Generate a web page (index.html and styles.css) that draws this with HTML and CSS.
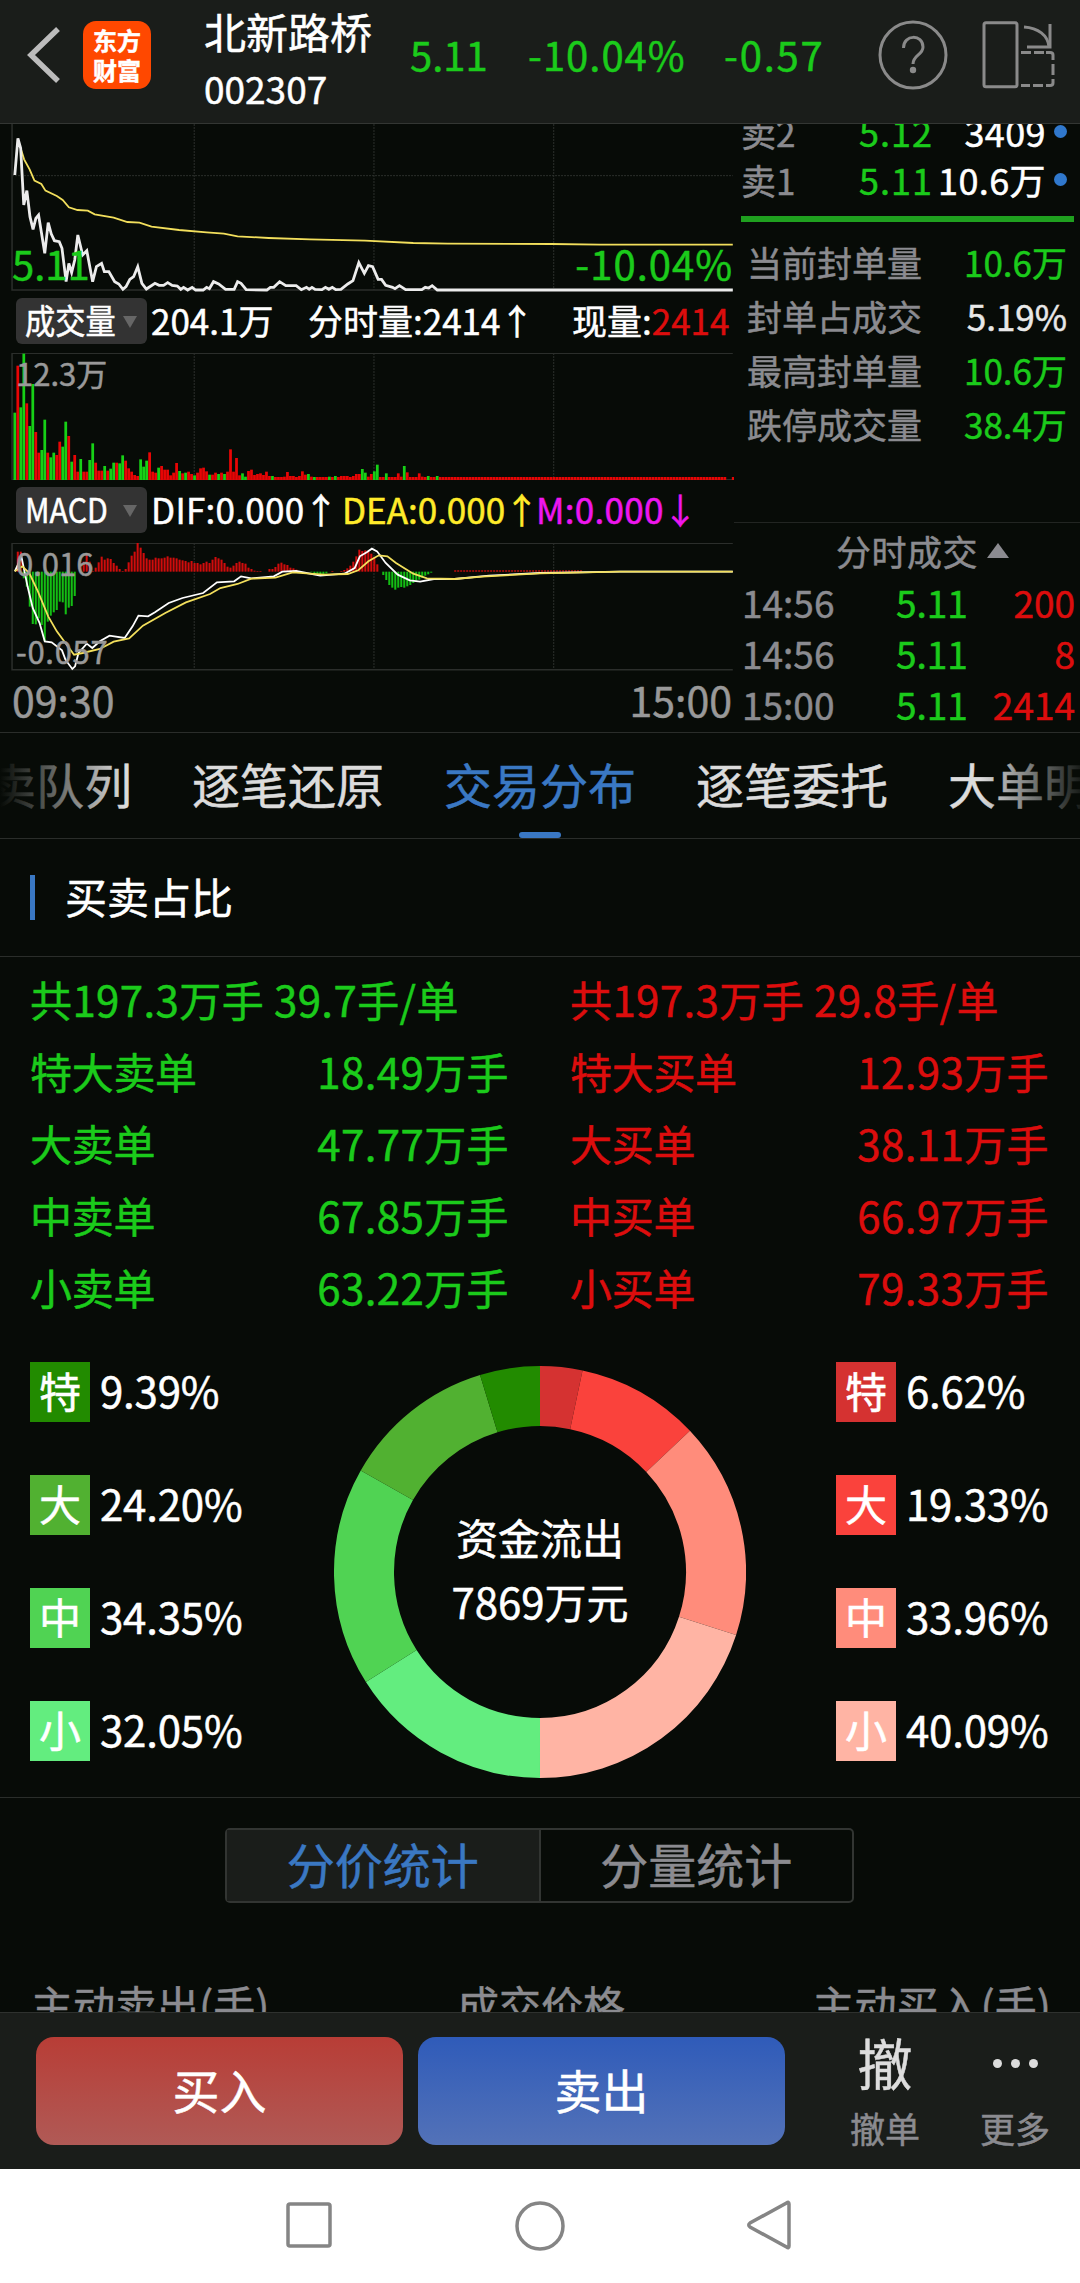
FILE: index.html
```html
<!DOCTYPE html>
<html lang="zh-CN">
<head>
  <meta charset="UTF-8">
  <meta name="viewport" content="width=device-width, initial-scale=1.0">
  <title>北新路桥 002307</title>
  <link rel="stylesheet" href="styles.css">
</head>
<body>
  <header class="topbar">
    <svg class="back" viewBox="0 0 40 60"><path d="M33 4 L6 30 L33 56"/></svg>
    <div class="logo">东方<br>财富</div>
    <div class="stock">
      <div class="stock-name">北新路桥</div>
      <div class="stock-code">002307</div>
    </div>
    <div class="quote">
      <span class="q-price">5.11</span>
      <span class="q-pct">-10.04%</span>
      <span class="q-diff">-0.57</span>
    </div>
    <svg class="help" viewBox="0 0 70 70">
      <circle cx="35" cy="35" r="33"/>
      <path d="M25.5 28 C25.5 14 45 14 45 27 C45 35 35 35 35 44"/>
      <circle class="dot" cx="35" cy="50" r="3.2"/>
    </svg>
    <svg class="rotate" viewBox="0 0 74 68">
      <rect x="2" y="1.8" width="33" height="64" rx="2"/>
      <path d="M42 6 C56 7 66 14 67 26"/>
      <path d="M68 3 V26 H45"/>
      <path d="M39 31.5 H49 M52 31.5 H62 M64 31.5 H68 Q71 31.5 71 34 V39 M71 43 V54 M71 58 V62 Q71 64.5 68 64.5 H64 M61 64.5 H51 M48 64.5 H39"/>
    </svg>
  </header>

  <!-- Minute charts and order book -->
  <section class="market">
    <div class="charts">
      <div class="chart price-chart">
        <svg viewBox="0 372 2131.5 504" preserveAspectRatio="none">
          <path class="grid" d="M564 372 V870 M1086 372 V870 M1608 372 V870 M35 527 H2128"/>
          <path class="frame" d="M35 372 V870 H2128"/>
          <polyline class="avg" points="60,445 70,478 86,508 100,542 120,552 132,572 165,588 182,600 200,622 225,630 255,632 275,643 330,653 370,666 405,668 440,680 520,690 600,697 650,701 690,709 780,714 900,718 1060,722 1200,729 1300,731 1600,732 1743,734 2128,734"/>
          <polyline class="price" points="43,525 52,415 60,445 69,615 78,572 87,650 96,688 104,655 112,645 130,760 140,668 149,702 158,722 172,725 180,745 192,845 200,790 208,818 217,780 226,705 240,765 252,752 269,845 280,800 295,790 303,815 316,815 333,845 345,852 357,868 366,860 377,838 388,830 400,800 412,850 425,867 450,850 462,856 475,856 487,848 500,856 515,858 525,868 533,862 545,870 558,862 568,870 590,870 600,862 608,866 620,845 635,852 655,868 680,868 690,845 700,850 715,869 775,870 785,862 795,862 812,845 830,857 860,857 875,869 890,862 898,868 906,862 915,868 935,869 945,862 955,868 965,862 975,869 990,868 1010,852 1025,842 1042,788 1058,820 1070,797 1082,800 1098,838 1108,838 1120,856 1140,862 1147,866 1160,857 1178,869 1225,869 1235,862 1245,864 1255,857 1270,870 2128,870"/>
        </svg>
        <span class="low-price">5.11</span>
        <span class="low-pct">-10.04%</span>
      </div>

      <div class="ind-row">
        <div class="pill"><span>成交量</span><i class="down"></i></div>
        <span class="v-total">204.1万</span>
        <span class="v-min">分时量:2414<b class="arr">↑</b></span>
        <span class="v-now">现量:<em>2414</em></span>
      </div>

      <div class="chart vol-chart">
        <svg viewBox="0 70 2131.5 381" preserveAspectRatio="none">
          <path class="grid" d="M564 70 V451 M1086 70 V451 M1608 70 V451"/>
          <path class="frame" d="M2128 71 H35 V450 H2128"/>
          <g id="volBars"></g>
        </svg>
        <span class="scale-top">12.3万</span>
      </div>

      <div class="ind-row">
        <div class="pill"><span>MACD</span><i class="down"></i></div>
        <span class="m-dif">DIF:0.000<b class="arr">↑</b></span>
        <span class="m-dea">DEA:0.000<b class="arr">↑</b></span>
        <span class="m-m">M:0.000<b class="arr">↓</b></span>
      </div>

      <div class="chart macd-chart">
        <svg viewBox="0 640 2131.5 384" preserveAspectRatio="none">
          <path class="grid" d="M564 640 V1020 M1086 640 V1020 M1608 640 V1020"/>
          <path class="frame" d="M2128 641 H35 V1020 H2128"/>
          <g id="macdBars"></g>
          <polyline class="dif" points="43,725 52,705 62,680 70,720 80,770 95,835 115,880 130,935 150,938 180,962 190,990 210,1018 218,1010 228,970 252,942 268,955 290,935 318,918 362,925 385,890 402,858 430,860 450,848 490,820 530,805 590,790 630,758 680,755 700,740 730,746 795,740 820,726 860,724 930,738 1000,732 1030,715 1045,680 1065,668 1080,657 1095,665 1120,700 1155,735 1190,752 1220,756 1260,748 1320,748 1420,738 1568,730 1800,726 2128,726"/>
          <polyline class="dea" points="43,725 65,710 85,730 110,785 140,860 165,905 190,940 215,975 240,970 290,958 330,936 375,926 415,888 480,850 540,818 610,793 640,775 690,763 730,747 800,744 850,728 940,735 1010,733 1040,722 1070,695 1100,677 1125,680 1150,700 1200,732 1240,746 1320,748 1400,741 1568,731 1800,726 2128,726"/>
        </svg>
        <span class="scale-top">0.016</span>
        <span class="scale-bottom">-0.057</span>
      </div>

      <div class="times"><span>09:30</span><span>15:00</span></div>
    </div>

    <aside class="book">
      <div class="asks">
        <div class="ask"><span>卖2</span><span class="green">5.12</span><span class="qty">3409</span><i></i></div>
        <div class="ask"><span>卖1</span><span class="green">5.11</span><span class="qty">10.6万</span><i></i></div>
      </div>
      <div class="seal">
        <div><span>当前封单量</span><span class="green">10.6万</span></div>
        <div><span>封单占成交</span><span class="light">5.19%</span></div>
        <div><span>最高封单量</span><span class="green">10.6万</span></div>
        <div><span>跌停成交量</span><span class="green">38.4万</span></div>
      </div>
      <div class="deals-title">分时成交<i></i></div>
      <div class="deals">
        <div><span>14:56</span><span class="green">5.11</span><span class="red">200</span></div>
        <div><span>14:56</span><span class="green">5.11</span><span class="red">8</span></div>
        <div><span>15:00</span><span class="green">5.11</span><span class="red">2414</span></div>
      </div>
    </aside>
  </section>

  <nav class="tabs">
    <span>买卖队列</span>
    <span>逐笔还原</span>
    <span class="active">交易分布</span>
    <span>逐笔委托</span>
    <span>大单明细</span>
  </nav>

  <h2 class="section-title">买卖占比</h2>

  <section class="orders">
    <div class="col green">
      <div>共197.3万手 39.7手/单</div>
      <div><span>特大卖单</span><span>18.49万手</span></div>
      <div><span>大卖单</span><span>47.77万手</span></div>
      <div><span>中卖单</span><span>67.85万手</span></div>
      <div><span>小卖单</span><span>63.22万手</span></div>
    </div>
    <div class="col red">
      <div>共197.3万手 29.8手/单</div>
      <div><span>特大买单</span><span>12.93万手</span></div>
      <div><span>大买单</span><span>38.11万手</span></div>
      <div><span>中买单</span><span>66.97万手</span></div>
      <div><span>小买单</span><span>79.33万手</span></div>
    </div>
  </section>

  <section class="flow">
    <div class="legend">
      <div><b class="s1">特</b>9.39%</div>
      <div><b class="s2">大</b>24.20%</div>
      <div><b class="s3">中</b>34.35%</div>
      <div><b class="s4">小</b>32.05%</div>
    </div>
    <div class="donut">
      <svg viewBox="0 0 412 412"><g id="ring"></g></svg>
      <div class="donut-text">资金流出<br>7869万元</div>
    </div>
    <div class="legend buy">
      <div><b class="b1">特</b>6.62%</div>
      <div><b class="b2">大</b>19.33%</div>
      <div><b class="b3">中</b>33.96%</div>
      <div><b class="b4">小</b>40.09%</div>
    </div>
  </section>

  <section class="stats">
    <div class="switch">
      <span class="on">分价统计</span>
      <span>分量统计</span>
    </div>
    <div class="stats-head">
      <span>主动卖出(手)</span>
      <span>成交价格</span>
      <span>主动买入(手)</span>
    </div>
  </section>

  <footer class="trade">
    <button class="buy-btn">买入</button>
    <button class="sell-btn">卖出</button>
    <div class="tool"><strong>撤</strong><small>撤单</small></div>
    <div class="tool more"><div class="dots"><i></i><i></i><i></i></div><small>更多</small></div>
  </footer>

  <div class="sysnav">
    <svg viewBox="0 0 52 52"><rect x="5" y="5" width="42" height="42" rx="2"/></svg>
    <svg viewBox="0 0 52 52"><circle cx="27" cy="27" r="23"/></svg>
    <svg viewBox="0 0 52 52"><path d="M46 5 V47 Q46 50 43.5 48 L7 28 Q4.5 26 7 24 L43.5 4 Q46 2 46 5 Z"/></svg>
  </div>

  <script>
    const NS = 'http://www.w3.org/2000/svg';
    const RED = '#e80505';
    const GREEN = '#16d016';
    const STEP = 8.7;

    function addBar(group, i, y, h, color, width) {
      const bar = document.createElementNS(NS, 'rect');
      bar.setAttribute('x', 43 + i * STEP - width / 2);
      bar.setAttribute('y', y);
      bar.setAttribute('width', width);
      bar.setAttribute('height', h);
      bar.setAttribute('fill', color);
      group.appendChild(bar);
    }

    // Volume per minute, negative = falling minute
    const volume = [
      -202, 343, -218, -379, 230, -162, -288, 144, 82, -90, -181, 82, -68, -82, 75, 115, -100, -175, 132, -55,
      75, 25, -63, 25, 25, -60, -110, 52, 28, 28, -42, 28, -34, -52, 52, -50, -74, 58, 35, 25,
      15, 12, -62, -40, -58, 83, 25, 22, -37, 42, 31, 31, 14, 22, 51, -27, 20, -22, 25, 18,
      -14, 22, 35, 37, 26, -16, 16, 22, -18, 22, -18, 25, 92, 25, 66, 14, -20, -10, 27, 31,
      15, 18, 20, 15, 25, 12, -12, 9, 9, 9, 10, 24, 12, 12, 9, 12, 26, 16, -18, 10,
      -9, 9, 9, 9, 9, -10, 9, -12, 9, 12, 12, 12, 9, 12, 18, 18, -33, -22, 10, 18,
      -26, -46, 9, 9, -20, 9, 9, 9, 20, 10, -42, 23, 9, 9, 9, 20, 10, 9, -12, 9, 9, -12
    ];
    const volBars = document.getElementById('volBars');
    for (let i = 0; i < 238; i++) {
      const v = i < volume.length ? volume[i] : 9;
      addBar(volBars, i, 451 - Math.abs(v), Math.abs(v), v < 0 ? GREEN : RED, 8);
    }
    addBar(volBars, 239.8, 442, 9, RED, 8);

    // MACD histogram around the zero line
    const macd = [
      0, 60, 60, -20, -45, -105, -157, -158, -140, -160, -208, -150, -132, -122, -115, -90, -92, -128, -108, -103,
      -73, 0, 15, 30, 50, 30, 2, 12, 28, 45, 36, 40, 38, 26, 18, 8, 2, 8, 28, 48,
      60, 86, 72, 56, 40, 36, 36, 42, 40, 40, 42, 46, 42, 42, 40, 36, 34, 32, 28, 32,
      26, 26, 22, 26, 30, 26, 36, 44, 40, 36, 26, 15, 12, 18, 26, 30, 26, 24, 12, 8,
      3, 2, 2, 0, 0, 8, 8, 14, 24, 27, 22, 20, 12, 10, 6, 2, 0, 0, 0, -2,
      -6, -6, -8, -7, -5, 0, 2, 0, 0, 2, 5, 10, 18, 30, 46, 66, 62, 64, 60, 54,
      44, 22, 0, -10, -25, -40, -48, -54, -48, -46, -48, -44, -40, -34, -28, -24, -18, -12, -8, -3
    ];
    const macdBars = document.getElementById('macdBars');
    for (let i = 0; i < 190; i++) {
      const v = i < macd.length ? macd[i] : (i > 146 ? 4 : 0);
      addBar(macdBars, i, v > 0 ? 726 - v : 726, Math.abs(v), v < 0 ? '#14bd14' : '#d00c0c', 6);
    }

    // Ring: buy side clockwise from the top, then sell side back up to it
    const parts = [
      [6.62, '#d53231'], [19.33, '#fa423c'], [33.96, '#ff8c7b'], [40.09, '#ffb4a4'],
      [32.05, '#63ed7f'], [34.35, '#50d353'], [24.20, '#51b131'], [9.40, '#228b00']
    ];
    const ring = document.getElementById('ring');
    const point = (v) => {
      const a = v / 100 * Math.PI;
      return (206 + 176 * Math.sin(a)).toFixed(2) + ' ' + (206 - 176 * Math.cos(a)).toFixed(2);
    };
    let start = 0;
    parts.forEach(([value, color]) => {
      const arc = document.createElementNS(NS, 'path');
      arc.setAttribute('d', 'M' + point(start) + ' A176 176 0 0 1 ' + point(start + value));
      arc.setAttribute('stroke', color);
      ring.appendChild(arc);
      start += value;
    });
  </script>
</body>
</html>
```
FILE: styles.css
```css
* {
  box-sizing: border-box;
}

body {
  margin: 0;
  width: 1080px;
  height: 2283px;
  overflow: hidden;
  background: #070b07;
  color: #fff;
  font-family: "Noto Sans CJK SC", "Noto Sans", sans-serif;
  font-size: 42px;
  white-space: nowrap;
  -webkit-text-stroke: 0.5px;
}

i, em {
  font-style: normal;
}

.green {
  color: #1bcb1b;
}

.red {
  color: #dc0d0d;
}

/* Top bar */
.topbar {
  display: flex;
  height: 124px;
  background: #1a1d1a;
  border-bottom: 1px solid #333633;
}

.back {
  width: 40px;
  height: 60px;
  margin: 25px 18px 0 25px;
  fill: none;
  stroke: #bcbcbc;
  stroke-width: 5.5;
}

.logo {
  width: 68px;
  height: 68px;
  margin: 21px 53px 0 0;
  padding-top: 4px;
  border-radius: 13px;
  background: #ff4800;
  font-size: 24px;
  font-weight: 700;
  line-height: 30px;
  text-align: center;
}

.stock {
  width: 206px;
}

.stock-name {
  height: 62px;
  font-size: 42px;
  line-height: 62px;
}

.stock-code {
  font-size: 37px;
  line-height: 56px;
  margin-top: -2px;
}

.quote {
  display: flex;
  width: 467px;
  color: #1bcb1b;
  font-size: 40px;
  line-height: 108px;
}

.q-price {
  width: 118px;
}

.q-pct {
  width: 196px;
  letter-spacing: 1px;
}

.q-diff {
  letter-spacing: 1.8px;
}

.help {
  width: 70px;
  height: 70px;
  margin: 20px 34px 0 1px;
  fill: none;
  stroke: #8a8a8a;
  stroke-width: 3;
}

.help .dot {
  fill: #8a8a8a;
  stroke: none;
}

.rotate {
  width: 74px;
  height: 68px;
  margin-top: 21px;
  fill: none;
  stroke: #8a8a8a;
  stroke-width: 3;
}

/* Charts */
.market {
  display: flex;
  height: 608px;
}

.charts {
  width: 734px;
}

.chart {
  position: relative;
}

.chart svg {
  display: block;
  width: 734px;
  height: 100%;
}

.chart path,
.chart polyline {
  fill: none;
  vector-effect: non-scaling-stroke;
}

.grid {
  stroke: #2c302c;
  stroke-width: 1;
  stroke-dasharray: 2 1;
}

.frame {
  stroke: #2b2e2b;
  stroke-width: 1.5;
}

.avg,
.dea {
  stroke: #f2df5c;
  stroke-width: 1.8;
}

.price {
  stroke: #ececec;
  stroke-width: 2.8;
}

.dif {
  stroke: #fff;
  stroke-width: 1.8;
}

.price-chart {
  height: 168px;
}

.vol-chart {
  height: 127px;
}

.macd-chart {
  height: 128px;
}

.low-price,
.low-pct {
  position: absolute;
  bottom: -1px;
  color: #1bcb1b;
  font-size: 40px;
  line-height: 60px;
}

.low-price {
  left: 12px;
}

.low-pct {
  right: 1px;
  letter-spacing: 1px;
}

.scale-top,
.scale-bottom {
  position: absolute;
  left: 16px;
  color: #999;
  font-size: 31px;
  line-height: 40px;
}

.scale-top {
  top: 0;
}

.scale-bottom {
  bottom: 0;
  letter-spacing: 0.7px;
}

.ind-row {
  display: flex;
  height: 61px;
  padding: 6px 0 0 16px;
  font-size: 35px;
  line-height: 44px;
}

.macd-chart + .times,
.vol-chart + .ind-row {
  margin-top: 1px;
}

.vol-chart + .ind-row {
  height: 62px;
}

.pill {
  display: flex;
  width: 131px;
  height: 46px;
  padding-left: 9px;
  border-radius: 6px;
  background: #333;
}

.pill span {
  width: 98px;
  font-size: 34px;
  line-height: 44px;
  transform: scaleX(0.89);
  transform-origin: left;
}

.down {
  height: 0;
  margin-top: 18px;
  border: 7px solid transparent;
  border-top: 12px solid #666;
  border-bottom: 0;
}

.arr {
  display: inline-block;
  width: 26px;
  font-weight: 400;
  text-indent: -1px;
}

.v-total {
  width: 161px;
  padding-left: 4px;
}

.v-min {
  width: 264px;
}

.v-now em {
  color: #dc0d0d;
}

.m-dif {
  width: 195px;
  padding-left: 4px;
  letter-spacing: 0.3px;
}

.m-dea {
  width: 194px;
  color: #ffeb2a;
}

.m-m {
  color: #ee16ee;
  letter-spacing: 0.3px;
}

.times {
  display: flex;
  justify-content: space-between;
  padding: 0 2px 0 12px;
  color: #999;
  font-size: 41px;
  line-height: 54px;
}

/* Order book */
.book {
  flex: 1;
  color: #8b8b90;
  font-size: 35px;
}

.asks {
  height: 98px;
  margin: 0 6px 0 7px;
  border-bottom: 6px solid #1fa01f;
  overflow: hidden;
}

.ask {
  display: flex;
  align-items: center;
  height: 48px;
}

.ask:first-child {
  margin-top: -17px;
}

.ask span {
  width: 118px;
}

.ask .green {
  width: 76px;
  font-size: 36px;
  letter-spacing: 1px;
}

.ask .qty {
  flex: 1;
  margin-left: -20px;
  color: #fff;
  font-size: 36px;
  letter-spacing: 0.4px;
  text-align: right;
}

.ask i {
  width: 13px;
  height: 13px;
  margin: 0 7px 0 8px;
  border-radius: 50%;
  background: #3078cc;
}

.seal {
  height: 301px;
  padding: 13px 13px 0 13px;
  border-bottom: 1px solid #222522;
}

.seal div {
  display: flex;
  justify-content: space-between;
  line-height: 54px;
}

.light {
  color: #e8e8e8;
}

.deals-title {
  display: flex;
  align-items: center;
  height: 54px;
  padding-left: 102px;
  letter-spacing: 0.5px;
}

.deals-title i {
  margin-left: 9px;
  border: 11px solid transparent;
  border-bottom: 15px solid #8b8b90;
  border-top: 0;
}

.deals div {
  display: grid;
  grid-template-columns: 154px 80px 1fr;
  padding: 0 5px 0 8px;
  font-size: 37px;
  line-height: 51px;
}

.deals .red {
  text-align: right;
}

/* Tabs */
.tabs {
  position: relative;
  display: flex;
  gap: 60px;
  height: 107px;
  border-top: 1px solid #2a2d2a;
  border-bottom: 1px solid #2a2d2a;
  overflow: hidden;
  color: #dcdcdc;
  font-size: 48px;
  line-height: 100px;
}

.tabs span:first-child {
  margin-left: -60px;
}

.tabs .active {
  position: relative;
  color: #3a78c3;
}

.tabs .active::after {
  content: "";
  position: absolute;
  left: 75px;
  bottom: 0;
  width: 42px;
  height: 6px;
  border-radius: 3px;
  background: #3a78c3;
}

/* fade at both ends of the tab strip */
.tabs::after {
  content: "";
  position: absolute;
  inset: 0;
  background: linear-gradient(90deg, #070b07 0, transparent 125px, transparent 980px, #070b07 1090px);
}

.section-title {
  display: flex;
  height: 118px;
  margin: 0;
  padding-left: 30px;
  border-bottom: 1px solid #2a2d2a;
  font-size: 42px;
  font-weight: 400;
  line-height: 114px;
}

.section-title::before {
  content: "";
  width: 5px;
  height: 45px;
  margin: 36px 30px 0 0;
  background: #3a78c3;
}

/* Order totals */
.orders {
  display: grid;
  grid-template-columns: 540px 540px;
  padding-top: 6px;
  height: 376px;
}

.col {
  padding: 0 31px 0 30px;
}

.col div {
  display: flex;
  justify-content: space-between;
  line-height: 72px;
  letter-spacing: 0.4px;
  white-space: pre;
}

.col span:first-child {
  letter-spacing: -0.3px;
}

/* Ratio ring */
.flow {
  display: flex;
  height: 465px;
  padding: 29px 0 0 30px;
  border-bottom: 1px solid #2a2d2a;
}

.legend {
  display: flex;
  flex-direction: column;
  gap: 53px;
  width: 304px;
  letter-spacing: -0.2px;
}

.legend.buy {
  width: 244px;
}

.legend div {
  display: flex;
  height: 60px;
  line-height: 56px;
}

.legend b {
  width: 60px;
  margin-right: 10px;
  font-weight: 400;
  text-align: center;
}

.s1 { background: #228b00; }
.s2 { background: #51b131; }
.s3 { background: #50d353; }
.s4 { background: #63ed7f; }
.b1 { background: #d53231; }
.b2 { background: #fa423c; }
.b3 { background: #ff8c7b; }
.b4 { background: #ffb4a4; }

.donut {
  position: relative;
  width: 412px;
  height: 412px;
  margin: 4px 90px 0 0;
}

.donut path {
  fill: none;
  stroke-width: 60;
}

.donut-text {
  position: absolute;
  inset: 139px 0 0;
  line-height: 64px;
  text-align: center;
}

/* Statistics */
.stats {
  height: 214px;
  overflow: hidden;
  color: #8b8b90;
}

.switch {
  display: flex;
  width: 629px;
  height: 75px;
  margin: 30px auto 0 225px;
  border: 2px solid #323532;
  border-radius: 5px;
  font-size: 48px;
  line-height: 67px;
}

.switch span {
  flex: 1;
  text-align: center;
}

.switch .on {
  border-right: 2px solid #323532;
  background: #1a1d1a;
  color: #3a78c3;
}

.stats-head {
  display: flex;
  justify-content: space-between;
  padding: 70px 29px 0 31px;
}

/* Trade bar */
.trade {
  display: flex;
  height: 157px;
  padding: 24px 0 0 36px;
  background: #1a1d1a;
  border-top: 1px solid #2e312e;
}

.trade button {
  width: 367px;
  height: 108px;
  margin-right: 15px;
  padding: 0 0 5px;
  border: 0;
  border-radius: 18px;
  color: #fff;
  font-family: inherit;
  font-size: 47px;
}

.buy-btn {
  background: linear-gradient(#b83d36, #b05a56);
}

.sell-btn {
  background: linear-gradient(#2f5bb9, #5372b8);
}

.tool {
  width: 70px;
  margin-left: 50px;
  text-align: center;
}

.tool strong {
  display: block;
  height: 76px;
  color: #ddd;
  font-size: 55px;
  font-weight: 400;
  line-height: 48px;
}

.tool small {
  display: block;
  color: #8b8b90;
  font-size: 35px;
  line-height: 30px;
}

.more {
  margin-left: 60px;
}

.dots {
  display: flex;
  justify-content: center;
  gap: 9px;
  height: 76px;
  padding-top: 22px;
}

.dots i {
  width: 9px;
  height: 9px;
  border-radius: 50%;
  background: #ddd;
}

/* System navigation */
.sysnav {
  display: flex;
  gap: 178px;
  height: 114px;
  padding: 30px 0 0 283px;
  background: #fff;
}

.sysnav svg {
  width: 52px;
  height: 52px;
  fill: none;
  stroke: #858585;
  stroke-width: 3.5;
}
```
